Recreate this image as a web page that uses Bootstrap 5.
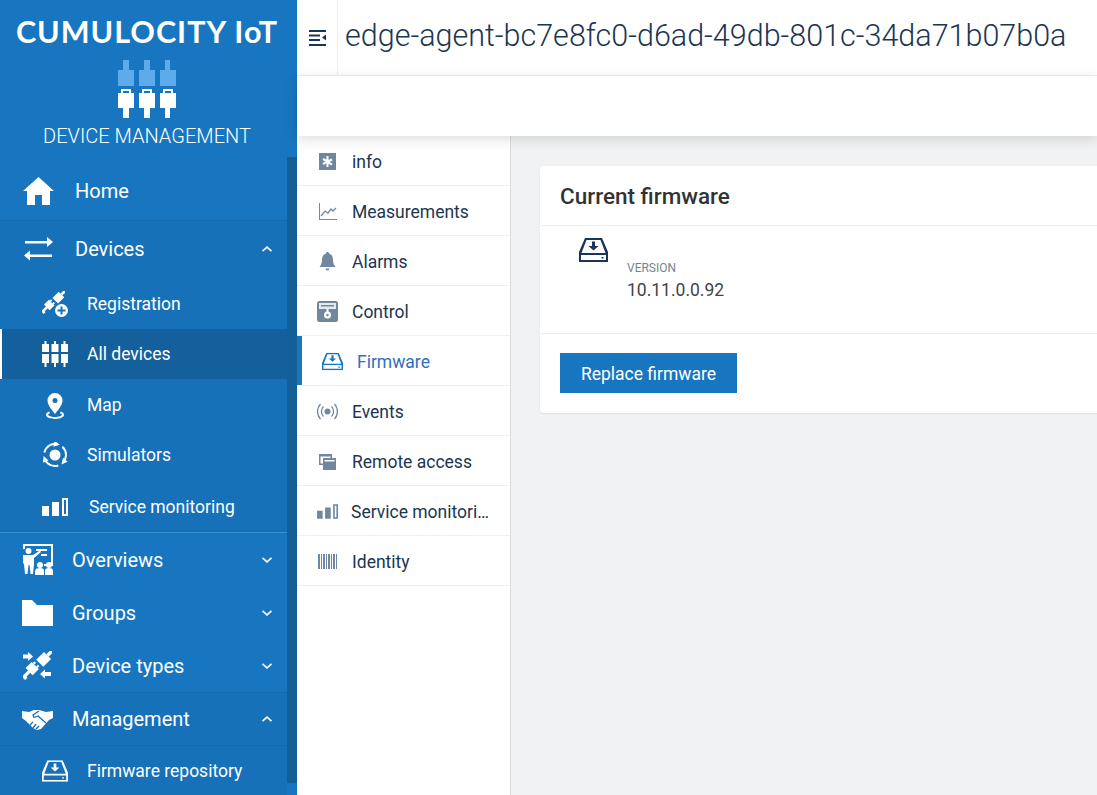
<!DOCTYPE html>
<html lang="en">
<head>
    <meta charset="UTF-8">
    <title>Cumulocity IoT - Device management</title>
    <link href="https://cdn.jsdelivr.net/npm/bootstrap@5.3.2/dist/css/bootstrap.min.css" rel="stylesheet">
    <style>
        html, body { height: 100%; overflow: hidden; }
        body { font-family: Roboto, "Liberation Sans", sans-serif; background: #f1f2f4; color: #333; }
        .app-shell { height: 795px; overflow: hidden; }

        /* left navigator */
        .side-nav { width: 297px; flex: 0 0 297px; background: #1776bf; color: #fff; position: relative; overflow: hidden; }
        .brand { height: 165px; text-align: center; padding-right: 3px; }
        .brand-name { font-family: Lato, sans-serif; font-weight: 700; font-size: 30.5px; line-height: 36px; padding-top: 13px; letter-spacing: 1px; white-space: nowrap; }
        .brand-logo { display: block; margin: 11px auto 0; }
        .brand-app { font-size: 20px; font-weight: 300; line-height: 24px; margin-top: 6px; }
        .side-scroll { position: absolute; right: 0; top: 157px; width: 10px; height: 626px; background: #155f99; }
        .nav-row { display: flex; align-items: center; width: 287px; color: #fff; text-decoration: none; white-space: nowrap; }
        .nav-top { font-size: 20px; }
        .nav-sub { font-size: 17.5px; }
        .nav-open { background: #1671b8; }
        .nav-line { border-bottom: 1px solid #1669aa; }
        .nav-line-light { border-bottom: 1px solid #3f8fcd; }
        .nav-row svg { flex: none; fill: #fff; }
        .nav-active { background: #14609c; box-shadow: inset 2px 0 0 #fff; }
        .nav-caret { margin-left: auto; margin-right: 15px; }
        .pad-lg { padding-left: 23px; gap: 21px; }
        .pad-md { padding-left: 22px; gap: 19px; }
        .pad-sub { padding-left: 42px; gap: 19px; }
        .pad-wide { padding-left: 42px; gap: 21px; }
        .row-50 { height: 50px; } .row-51 { height: 51px; }
        .row-53 { height: 53px; } .row-54 { height: 54px; } .row-56 { height: 56px; } .row-58 { height: 58px; }
        .nudge-up { padding-bottom: 3px; }
        .nudge-down { padding-top: 2px; }

        /* header */
        .page-area { min-width: 0; }
        .title-bar { height: 76px; background: #fff; border-bottom: 1px solid #f1f1f1; }
        .toggle-cell { width: 41px; flex: none; border-right: 1px solid #eee; }
        .page-title { font-size: 30.5px; font-weight: 300; color: #1c3553; margin-left: 7px; white-space: nowrap; line-height: 72px; }
        .action-bar { height: 60px; background: #fff; box-shadow: 0 3px 12px rgba(0,0,0,.14); position: relative; z-index: 2; }

        /* tabs */
        .tab-col { width: 214px; flex: 0 0 214px; background: #fff; border-right: 1px solid #dcdcdc; }
        .tab-item { height: 50px; display: flex; align-items: center; border-bottom: 1px solid #f0f0f0; padding-left: 20px; padding-top: 3px; gap: 14px; font-size: 17.5px; color: #1c3553; text-decoration: none; white-space: nowrap; }
        .tab-item svg { flex: none; width: 21px; height: 21px; fill: #6f88a0; margin-top: -2px; }
        .tab-on { color: #2f6fbd; box-shadow: inset 5px 0 0 #1776bf; padding-left: 25px; }
        .tab-on svg { fill: #1776bf; }
        .tab-tight { gap: 13px; }
        .tab-clip { width: 145px; overflow: hidden; text-overflow: ellipsis; }

        /* content */
        .content-area { padding: 30px 0 0 29px; min-width: 0; }
        .fw-card { width: 600px; height: 247px; border: 0; border-radius: 4px; background: #fff; box-shadow: 0 1px 2px rgba(0,0,0,.08); }
        .fw-head { height: 60px; padding: 0 20px; border-bottom: 1px solid #f0f0f0; font-size: 22.5px; font-weight: 500; line-height: 60px; color: #333; }
        .fw-body { height: 108px; border-bottom: 1px solid #f0f0f0; padding: 12px 0 0 39px; }
        .fw-text { margin-left: 19px; }
        .fw-label { font-size: 12px; line-height: 14px; color: #78838e; margin-top: 23px; }
        .fw-value { font-size: 17.5px; line-height: 24px; color: #444; margin-top: 3px; }
        .fw-foot { padding: 19px 20px; }
        .btn-fw { background: #1776bf; color: #fff; border: 0; border-radius: 0; width: 177px; height: 40px; font-size: 17.5px; padding: 2px 0 0; }
    </style>
</head>
<body>
    <svg width="0" height="0" class="position-absolute">
        <symbol id="i-inbox" viewBox="0 0 29 24">
            <path d="M6 0h17l6 14v10H0V14zM7.500 2L2.500 15h24L21.500 2zM2 17v5h25v-5zM22.500 19h2v1.500h-2z" fill-rule="evenodd"/>
            <path d="M13 3.500h3V8h3.500l-5 4.500-5-4.500H13z"/>
        </symbol>
        <symbol id="i-bars" viewBox="0 0 26 20">
            <path d="M0 9h7v10H0zM10 5h7v14h-7zM20 1h6v18h-6zM22 3v14h2V3z" fill-rule="evenodd"/>
        </symbol>
        <symbol id="i-plug" viewBox="0 0 26 26">
            <g fill="none" stroke="#fff">
                <path stroke-width="3" d="M26 0l-4 4"/>
                <path stroke-width="9" d="M22 4l-7 7"/>
                <path stroke-width="2" d="M9.500 11.500L11 10M12.500 14.500L14 13"/>
                <path stroke-width="9" d="M11 13l-5.500 5.500"/>
                <path stroke-width="3" d="M6 18l-5 5 2 2"/>
            </g>
        </symbol>
    </svg>

    <div class="app-shell d-flex">
        <aside class="side-nav">
            <div class="brand">
                <div class="brand-name">CUMULOCITY IoT</div>
                <svg class="brand-logo" width="58" height="58" viewBox="0 0 58 58">
                    <path fill="#5eabec" d="M5 0h6v10h5v16H0V10h5zM26 0h6v10h5v16H21V10h5zM47 0h5v10h6v16H42V10h5z"/>
                    <path fill="#fff" d="M3 29h10v4h3v15h-5v10H5V48H0V33h3zM5 31v2h6v-2zM24 29h10v4h3v15h-5v10h-6V48h-5V33h3zM26 31v2h6v-2zM45 29h10v4h3v15h-6v10h-5V48h-5V33h3zM47 31v2h6v-2z" fill-rule="evenodd"/>
                </svg>
                <div class="brand-app">DEVICE MANAGEMENT</div>
            </div>

            <a href="#" class="nav-row nav-top nav-line row-56 pad-lg nudge-up">
                <svg width="31" height="28" viewBox="0 0 31 28"><path d="M15.500 0L31 14h-4v14h-8V18h-7v10H4V14H0z"/></svg>
                <span>Home</span>
            </a>
            <a href="#" class="nav-row nav-top nav-open row-58 pad-lg nudge-up">
                <svg width="31" height="26" viewBox="0 0 31 26"><path d="M2 5h22V1l6 5-6 5V7.500H2zM29 18.500H7v-4l-6 5 6 5v-3.500h22z"/></svg>
                <span>Devices</span>
                <svg class="nav-caret" width="10" height="6" viewBox="0 0 10 6"><path d="M5 0l5 4.500-1 1.300L5 2.300 1 5.800 0 4.500z"/></svg>
            </a>
            <a href="#" class="nav-row nav-sub nav-open row-50 pad-sub">
                <svg width="26" height="26" viewBox="0 0 26 26"><use href="#i-plug" width="23" height="23"/><circle cx="19.500" cy="19.500" r="6.500" fill="#fff"/><path fill="#1671b8" d="M18.500 15.500h2v3h3v2h-3v3h-2v-3h-3v-2h3z"/></svg>
                <span>Registration</span>
            </a>
            <a href="#" class="nav-row nav-sub nav-active row-50 pad-sub">
                <svg width="26" height="26" viewBox="0 0 26 26"><path d="M2.500 0h2v3h2.500v8H0V3h2.500zM12 0h2v3h2.500v8h-7V3H12zM21.500 0h2v3H26v8h-7V3h2.500zM0 13h7v9H4.500v4h-2v-4H0zM9.500 13h7v9H14v4h-2v-4H9.500zM19 13h7v9h-2.500v4h-2v-4H19z"/></svg>
                <span>All devices</span>
            </a>
            <a href="#" class="nav-row nav-sub nav-open row-51 pad-sub nudge-down">
                <svg width="26" height="26" viewBox="0 0 26 26"><path fill-rule="evenodd" d="M13 0a7.500 7.500 0 0 1 7.500 7.500C20.500 12 16 17 13 21 10 17 5.500 12 5.500 7.500A7.500 7.500 0 0 1 13 0zm0 5a2.500 2.500 0 1 0 0 5 2.500 2.500 0 0 0 0-5z"/><path d="M7 18.500l1.200 1.500c-1.200.5-2 1-2 1.800C6.200 23 9 24 13 24s6.800-1 6.800-2.200c0-.8-.8-1.300-2-1.800l1.200-1.500c2 .7 3 2 3 3.300 0 2.400-4 4.200-9 4.200s-9-1.800-9-4.200c0-1.300 1-2.600 3-3.300z"/></svg>
                <span>Map</span>
            </a>
            <a href="#" class="nav-row nav-sub nav-open row-50 pad-sub">
                <svg width="26" height="26" viewBox="0 0 26 26">
                    <circle cx="13" cy="13" r="5.500"/>
                    <circle cx="13" cy="13" r="11" fill="none" stroke="#fff" stroke-width="2" stroke-dasharray="17 6" transform="rotate(-48 13 13)"/>
                    <path d="M-3-3L3 0l-6 3z" transform="translate(14.900 2.200) rotate(10)"/>
                    <path d="M-3-3L3 0l-6 3z" transform="translate(21.400 20.100) rotate(130)"/>
                    <path d="M-3-3L3 0l-6 3z" transform="translate(2.700 16.800) rotate(250)"/>
                </svg>
                <span>Simulators</span>
            </a>
            <a href="#" class="nav-row nav-sub nav-open nav-line-light row-53 pad-wide nudge-down">
                <svg width="26" height="20" viewBox="0 0 26 20"><use href="#i-bars"/></svg>
                <span>Service monitoring</span>
            </a>
            <a href="#" class="nav-row nav-top row-53 pad-md">
                <svg width="31" height="31" viewBox="0 0 31 31"><path fill-rule="evenodd" d="M1 0h30v22h-9v-2h7V2H3v3H1zM6.500 4a3 3 0 1 1 0 6 3 3 0 0 1 0-6zM1 11h10l7-4.500 1 1.500-7 6v6l-1 10H8.500l-1-9h-1l-1 9H3l-1-10-1-1zM14 5h11v2H14zM19 10h6v2h-6z"/><circle cx="18" cy="21" r="3"/><circle cx="27" cy="21" r="3"/><path d="M13 31v-4c0-2 2-3 5-3s4 1 4 3v4zM23 31v-4c0-2 1-3 4-3s4 1 4 3v4z"/></svg>
                <span>Overviews</span>
                <svg class="nav-caret" width="10" height="6" viewBox="0 0 10 6"><path d="M5 6L0 1.500 1 .2l4 3.500L9 .2l1 1.300z"/></svg>
            </a>
            <a href="#" class="nav-row nav-top row-54 pad-md">
                <svg width="31" height="26" viewBox="0 0 31 26"><path d="M0 0h10l5 5h16v21H0z"/></svg>
                <span>Groups</span>
                <svg class="nav-caret" width="10" height="6" viewBox="0 0 10 6"><path d="M5 6L0 1.500 1 .2l4 3.500L9 .2l1 1.300z"/></svg>
            </a>
            <a href="#" class="nav-row nav-top nav-line row-53 pad-md">
                <svg width="31" height="30" viewBox="0 0 31 30">
                    <use href="#i-plug" x="1" y="0" width="29" height="29"/>
                    <path d="M1 3.500h5V1l5 4.500L6 10V7.500H1zM29 21h-6v-2.500l-5 4.500 5 4.500V25h6z"/>
                </svg>
                <span>Device types</span>
                <svg class="nav-caret" width="10" height="6" viewBox="0 0 10 6"><path d="M5 6L0 1.500 1 .2l4 3.500L9 .2l1 1.300z"/></svg>
            </a>
            <a href="#" class="nav-row nav-top nav-open nav-line row-53 pad-md">
                <svg width="31" height="21" viewBox="0 0 31 21">
                    <path d="M0 2l7 1 5-2h5l7 2 7-1v7l-4 2-8 9-4 1-4-2-7-7-4-3z"/>
                    <path fill="none" stroke="#1671b8" stroke-width="1.300" d="M17 2l-6 4 1 2.500L16 7l8 7M11 19l3-4M14 20l3-3M8 16l3-3"/>
                </svg>
                <span>Management</span>
                <svg class="nav-caret" width="10" height="6" viewBox="0 0 10 6"><path d="M5 0l5 4.500-1 1.300L5 2.300 1 5.800 0 4.500z"/></svg>
            </a>
            <a href="#" class="nav-row nav-sub nav-open row-50 pad-sub">
                <svg width="26" height="22" viewBox="0 0 29 24"><use href="#i-inbox"/></svg>
                <span>Firmware repository</span>
            </a>
            <div class="side-scroll"></div>
        </aside>

        <div class="page-area flex-grow-1 d-flex flex-column">
            <div class="title-bar d-flex align-items-stretch">
                <div class="toggle-cell d-flex align-items-center justify-content-center">
                    <svg width="17" height="16" viewBox="0 0 17 16" fill="#1c3553"><path d="M0 0h17v2H0zM0 4.500h11v2H0zM0 9h11v2H0zM0 14h17v2H0zM17 4.500v6l-4-3z"/></svg>
                </div>
                <div class="page-title">edge-agent-bc7e8fc0-d6ad-49db-801c-34da71b07b0a</div>
            </div>
            <div class="action-bar"></div>
            <div class="d-flex flex-grow-1">
                <nav class="tab-col">
                    <a href="#" class="tab-item">
                        <svg viewBox="0 0 21 21"><path fill-rule="evenodd" d="M2 2h17v17H2zM9.500 5v3.500L6.500 7l-1 2 3 1.500-3 1.500 1 2 3-1.800V16h2v-3.300l3 1.800 1-2-3-1.500 3-1.500-1-2-3 1.500V5z"/></svg>
                        <span>info</span>
                    </a>
                    <a href="#" class="tab-item">
                        <svg viewBox="0 0 21 21"><path d="M2 2h1v16h17v1H2z"/><path fill="none" stroke="#6f88a0" stroke-width="1.300" d="M4 15l4-5 3 2 3-4 2 2 3-3"/></svg>
                        <span>Measurements</span>
                    </a>
                    <a href="#" class="tab-item">
                        <svg viewBox="0 0 21 21"><path d="M10.500 1c1 0 1.500.7 1.500 1.500 3 1 4 3.500 4 6.500 0 3 1 5 2.500 7h-16C4 14 5 12 5 9c0-3 1-5.500 4-6.500C9 1.700 9.500 1 10.500 1zM8.500 17.500h4c0 1-1 2-2 2s-2-1-2-2z"/></svg>
                        <span>Alarms</span>
                    </a>
                    <a href="#" class="tab-item">
                        <svg viewBox="0 0 21 21">
                            <rect width="21" height="21" rx="2.500"/>
                            <rect x="2" y="2" width="17" height="6" fill="#e4e9ee"/>
                            <path d="M4 4h13v1.500H4z"/>
                            <path d="M9.500 8h2v3h-2z" fill="#fff"/>
                            <circle cx="10.500" cy="14" r="3.500" fill="#fff"/>
                            <circle cx="10.500" cy="14" r="1.200"/>
                        </svg>
                        <span>Control</span>
                    </a>
                    <a href="#" class="tab-item tab-on">
                        <svg viewBox="0 0 29 24"><use href="#i-inbox"/></svg>
                        <span>Firmware</span>
                    </a>
                    <a href="#" class="tab-item">
                        <svg viewBox="0 0 21 21"><circle cx="10.500" cy="10.500" r="3"/><path fill="none" stroke="#6f88a0" stroke-width="1.300" d="M6.500 5.500a7 7 0 0 0 0 10M14.500 5.500a7 7 0 0 1 0 10M3.500 3a11 11 0 0 0 0 15M17.500 3a11 11 0 0 1 0 15"/></svg>
                        <span>Events</span>
                    </a>
                    <a href="#" class="tab-item">
                        <svg viewBox="0 0 21 21"><path fill-rule="evenodd" d="M2 3h13v4h4v12H6v-5H2zM3.500 5.500v7H6V7h7.500V5.500zM7.500 9v1.500h10V9z"/></svg>
                        <span>Remote access</span>
                    </a>
                    <a href="#" class="tab-item tab-tight">
                        <svg viewBox="0 0 26 20"><use href="#i-bars"/></svg>
                        <span class="tab-clip">Service monitoring</span>
                    </a>
                    <a href="#" class="tab-item">
                        <svg viewBox="0 0 21 21"><path d="M1 3h2v15H1zM4 3h1v15H4zM6 3h2v15H6zM9 3h1v15H9zM11 3h2v15h-2zM14 3h1v15h-1zM16 3h2v15h-2zM19 3h1v15h-1z"/></svg>
                        <span>Identity</span>
                    </a>
                </nav>
                <main class="content-area flex-grow-1">
                    <div class="card fw-card">
                        <div class="fw-head">Current firmware</div>
                        <div class="fw-body d-flex">
                            <svg width="29" height="24" viewBox="0 0 29 24" fill="#1c3553" class="flex-shrink-0"><use href="#i-inbox"/></svg>
                            <div class="fw-text">
                                <div class="fw-label">VERSION</div>
                                <div class="fw-value">10.11.0.0.92</div>
                            </div>
                        </div>
                        <div class="fw-foot">
                            <button type="button" class="btn btn-fw">Replace firmware</button>
                        </div>
                    </div>
                </main>
            </div>
        </div>
    </div>

    <script src="https://cdn.jsdelivr.net/npm/bootstrap@5.3.2/dist/js/bootstrap.bundle.min.js"></script>
</body>
</html>
